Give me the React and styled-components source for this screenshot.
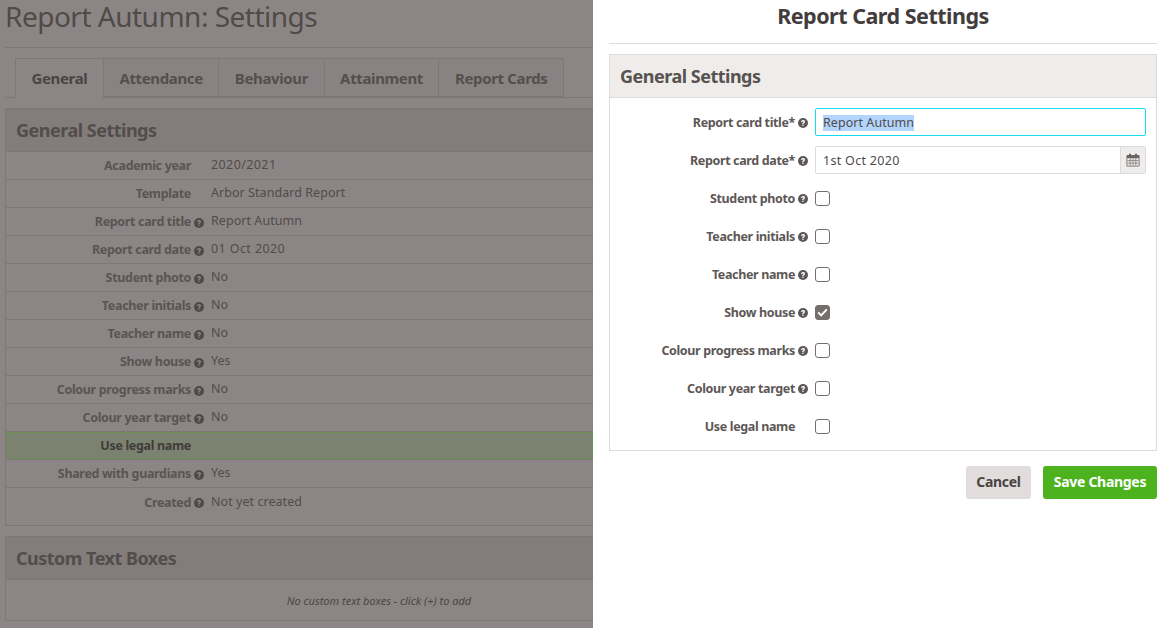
import React from "react";
import styled, { createGlobalStyle } from "styled-components";

const font = `"Noto Sans", "Open Sans", sans-serif`;

const GlobalStyle = createGlobalStyle`
  html, body {
    margin: 0;
    padding: 0;
    background: #fff;
  }
  body {
    font-family: ${font};
    overflow: hidden;
  }
`;

const tabs = ["General", "Attendance", "Behaviour", "Attainment", "Report Cards"];

const summaryRows = [
  { label: "Academic year", value: "2020/2021" },
  { label: "Template", value: "Arbor Standard Report" },
  { label: "Report card title", value: "Report Autumn", help: true },
  { label: "Report card date", value: "01 Oct 2020", help: true },
  { label: "Student photo", value: "No", help: true },
  { label: "Teacher initials", value: "No", help: true },
  { label: "Teacher name", value: "No", help: true },
  { label: "Show house", value: "Yes", help: true },
  { label: "Colour progress marks", value: "No", help: true },
  { label: "Colour year target", value: "No", help: true },
  { label: "Use legal name", value: "", highlight: true },
  { label: "Shared with guardians", value: "Yes", help: true },
  { label: "Created", value: "Not yet created", help: true },
];

const checkRows = [
  { label: "Student photo", help: true },
  { label: "Teacher initials", help: true },
  { label: "Teacher name", help: true },
  { label: "Show house", help: true, checked: true },
  { label: "Colour progress marks", help: true },
  { label: "Colour year target", help: true },
  { label: "Use legal name" },
];

const HelpIcon = ({ color, mark }) => (
  <HelpSvg viewBox="0 0 10 10">
    <circle cx="5" cy="5" r="5" fill={color} />
    <path
      d="M3.1 3.9c0-1.1.9-1.8 2-1.8s1.9.7 1.9 1.7c0 1.3-1.4 1.3-1.4 2.2H4.3c0-1.5 1.3-1.5 1.3-2.2 0-.3-.2-.5-.6-.5s-.6.2-.6.6H3.1z"
      fill={mark}
    />
    <rect x="4.3" y="6.6" width="1.3" height="1.3" fill={mark} />
  </HelpSvg>
);

const CalendarIcon = () => (
  <svg width="14" height="14" viewBox="0 0 14 14">
    <rect x="0.5" y="2" width="13" height="11.5" rx="1" fill="#6a6463" />
    <rect x="3" y="0.5" width="2" height="3" rx="0.8" fill="#6a6463" />
    <rect x="9" y="0.5" width="2" height="3" rx="0.8" fill="#6a6463" />
    <path d="M1.3 5.2h11.4v7.5H1.3z" fill="#eeedeb" />
    <path
      d="M4.2 5v7.7M7 5v7.7M9.8 5v7.7M1.3 7.6h11.4M1.3 10.1h11.4"
      stroke="#8a8584"
      strokeWidth="0.9"
    />
  </svg>
);

const CheckIcon = () => (
  <svg width="11" height="9" viewBox="0 0 11 9">
    <path d="M1.2 4.4l3 3 5.6-6" fill="none" stroke="#fff" strokeWidth="2" />
  </svg>
);

export default function App() {
  return (
    <Page>
      <GlobalStyle />
      <Background>
        <PageTitle>Report Autumn: Settings</PageTitle>
        <TabBar>
          {tabs.map((tab, idx) => (
            <Tab key={tab} $active={idx === 0}>
              {tab}
            </Tab>
          ))}
        </TabBar>
        <DimSection>
          <DimHeading>General Settings</DimHeading>
          <SummaryList>
            {summaryRows.map((row) => (
              <SummaryRow key={row.label} $highlight={row.highlight}>
                <SummaryLabel $highlight={row.highlight} $help={row.help}>
                  <span>{row.label}</span>
                  {row.help && <HelpIcon color="#4f4948" mark="#8b8685" />}
                </SummaryLabel>
                <SummaryValue $digits={/\d/.test(row.value)}>{row.value}</SummaryValue>
              </SummaryRow>
            ))}
          </SummaryList>
        </DimSection>
        <DimSection>
          <DimHeading>Custom Text Boxes</DimHeading>
          <EmptyNote>No custom text boxes - click (+) to add</EmptyNote>
        </DimSection>
      </Background>

      <Slideover>
        <SlideTitle>Report Card Settings</SlideTitle>
        <FormPanel>
          <FormHeading>General Settings</FormHeading>
          <FormBody>
            <FormRow>
              <FormLabel $help>
                <span>Report card title*</span>
                <HelpIcon color="#5d5756" mark="#fff" />
              </FormLabel>
              <TitleField>
                <Selected>Report Autumn</Selected>
              </TitleField>
            </FormRow>
            <FormRow>
              <FormLabel $help>
                <span>Report card date*</span>
                <HelpIcon color="#5d5756" mark="#fff" />
              </FormLabel>
              <DateField>
                <DateText>1st Oct 2020</DateText>
                <DateButton>
                  <CalendarIcon />
                </DateButton>
              </DateField>
            </FormRow>
            {checkRows.map((row) => (
              <FormRow key={row.label}>
                <FormLabel $help={row.help}>
                  <span>{row.label}</span>
                  {row.help && <HelpIcon color="#5d5756" mark="#fff" />}
                </FormLabel>
                <CheckBox $checked={row.checked}>{row.checked && <CheckIcon />}</CheckBox>
              </FormRow>
            ))}
          </FormBody>
        </FormPanel>
        <Actions>
          <CancelButton>Cancel</CancelButton>
          <SaveButton>Save Changes</SaveButton>
        </Actions>
      </Slideover>
    </Page>
  );
}

const Page = styled.div`
  width: 1164px;
  height: 628px;
  display: flex;
  overflow: hidden;
`;

const Background = styled.div`
  width: 593px;
  flex-shrink: 0;
  height: 628px;
  overflow: hidden;
  background: #8b8685;
  padding-left: 5px;
  box-sizing: border-box;
`;

const PageTitle = styled.h1`
  margin: 0;
  height: 48px;
  box-sizing: border-box;
  border-bottom: 1px solid #7d7877;
  font-size: 28px;
  line-height: 32px;
  font-weight: 400;
  letter-spacing: -0.5px;
  white-space: nowrap;
  color: #504a49;
`;

const TabBar = styled.div`
  display: flex;
  height: 40px;
  margin-top: 10px;
  padding-left: 10px;
  box-sizing: border-box;
  border-bottom: 1px solid #7d7877;
`;

const Tab = styled.div`
  height: ${({ $active }) => ($active ? "40px" : "39px")};
  box-sizing: border-box;
  padding: 0 15.5px;
  border: 1px solid #7d7877;
  border-left-width: ${({ $active }) => ($active ? "1px" : "0")};
  border-bottom-width: ${({ $active }) => ($active ? "0" : "1px")};
  background: ${({ $active }) => ($active ? "#8b8685" : "#888382")};
  font-size: 15px;
  font-weight: 700;
  line-height: 38px;
  letter-spacing: -0.36px;
  white-space: nowrap;
  color: ${({ $active }) => ($active ? "#4a4443" : "#544e4d")};
`;

const DimSection = styled.section`
  margin-top: 10px;
  box-sizing: border-box;
  border: 1px solid #7d7877;
  border-right: none;
`;

const DimHeading = styled.h2`
  margin: 0;
  height: 43px;
  box-sizing: border-box;
  padding-left: 10px;
  background: #827c7b;
  border-bottom: 1px solid #7d7877;
  font-size: 18px;
  line-height: 42px;
  font-weight: 700;
  letter-spacing: -0.5px;
  color: #524c4b;
`;

const SummaryList = styled.div`
  padding-bottom: 9px;
`;

const SummaryRow = styled.div`
  display: grid;
  grid-template-columns: 198px 1fr;
  column-gap: 7px;
  align-items: center;
  height: 28px;
  box-sizing: border-box;
  border-bottom: 1px solid #7d7877;
  background: ${({ $highlight }) => ($highlight ? "#7b8270" : "transparent")};
  box-shadow: ${({ $highlight }) => ($highlight ? "inset 0 0 0 1px #6d9057" : "none")};
  &:last-child {
    border-bottom: none;
  }
`;

const SummaryLabel = styled.div`
  display: flex;
  align-items: center;
  justify-content: flex-end;
  gap: 3px;
  padding-right: ${({ $help }) => ($help ? "0" : "13px")};
  font-size: 12.5px;
  font-weight: 700;
  letter-spacing: -0.33px;
  white-space: nowrap;
  color: ${({ $highlight }) => ($highlight ? "#413c3a" : "#5a5453")};
`;

const SummaryValue = styled.div`
  margin-bottom: 2px;
  font-size: 12.5px;
  letter-spacing: ${({ $digits }) => ($digits ? "0.4px" : "0.05px")};
  color: #514b4a;
`;

const HelpSvg = styled.svg`
  width: 10px;
  height: 10px;
  flex-shrink: 0;
  margin-top: 2px;
`;

const EmptyNote = styled.div`
  height: 40px;
  padding-left: 159px;
  font-size: 11px;
  font-style: italic;
  line-height: 41px;
  text-align: center;
  color: #4b4544;
`;

const Slideover = styled.aside`
  width: 571px;
  height: 628px;
  box-sizing: border-box;
  padding: 0 7px 0 16px;
  background: #fff;
`;

const SlideTitle = styled.h2`
  margin: 0 0 10px;
  height: 44px;
  box-sizing: border-box;
  border-bottom: 1px solid #dedcdb;
  text-align: center;
  font-size: 21.5px;
  font-weight: 700;
  line-height: 31px;
  letter-spacing: -0.5px;
  color: #423d3c;
`;

const FormPanel = styled.section`
  height: 397px;
  box-sizing: border-box;
  border: 1px solid #dedcdb;
`;

const FormHeading = styled.h3`
  margin: 0;
  height: 43px;
  box-sizing: border-box;
  padding-left: 10px;
  background: #eeedeb;
  border-bottom: 1px solid #dedcdb;
  font-size: 18px;
  line-height: 42px;
  font-weight: 700;
  letter-spacing: -0.5px;
  color: #585251;
`;

const FormBody = styled.div`
  display: flex;
  flex-direction: column;
  gap: 10px;
  padding: 10px 10px 0 0;
`;

const FormRow = styled.div`
  display: grid;
  grid-template-columns: 198px 1fr;
  column-gap: 7px;
  align-items: center;
  height: 28px;
`;

const FormLabel = styled.div`
  display: flex;
  align-items: center;
  justify-content: flex-end;
  gap: 3px;
  padding-right: ${({ $help }) => ($help ? "0" : "13px")};
  font-size: 12.5px;
  font-weight: 700;
  letter-spacing: -0.36px;
  white-space: nowrap;
  color: #5d5756;
`;

const TitleField = styled.div`
  height: 28px;
  box-sizing: border-box;
  padding-left: 7px;
  border: 1px solid #17d9ee;
  border-radius: 2px;
  font-size: 12.5px;
  line-height: 27px;
  letter-spacing: 0.05px;
  color: #514b4a;
`;

const Selected = styled.span`
  display: inline-block;
  line-height: 16px;
  background: #b3d4fc;
`;

const DateField = styled.div`
  display: flex;
  height: 28px;
  box-sizing: border-box;
  border: 1px solid #dedcdb;
  border-radius: 2px;
`;

const DateText = styled.div`
  flex: 1;
  padding-left: 7px;
  font-size: 12.5px;
  line-height: 27px;
  letter-spacing: 0.3px;
  color: #514b4a;
`;

const DateButton = styled.div`
  width: 24px;
  display: flex;
  align-items: center;
  justify-content: center;
  background: #eeedeb;
  border-left: 1px solid #dedcdb;
`;

const CheckBox = styled.div`
  width: 15px;
  height: 15px;
  box-sizing: border-box;
  display: flex;
  align-items: center;
  justify-content: center;
  border: 1px solid #756e6c;
  border-radius: 3px;
  background: ${({ $checked }) => ($checked ? "#756e6c" : "#fff")};
`;

const Actions = styled.div`
  display: flex;
  justify-content: flex-end;
  gap: 12px;
  margin-top: 15px;
`;

const CancelButton = styled.button`
  width: 65px;
  height: 33px;
  padding: 0 0 2px;
  border: none;
  border-radius: 3px;
  background: #e0dddc;
  font-family: ${font};
  font-size: 14px;
  font-weight: 700;
  letter-spacing: -0.3px;
  color: #494443;
`;

const SaveButton = styled(CancelButton)`
  width: 114px;
  background: #4cb31f;
  color: #fff;
`;
